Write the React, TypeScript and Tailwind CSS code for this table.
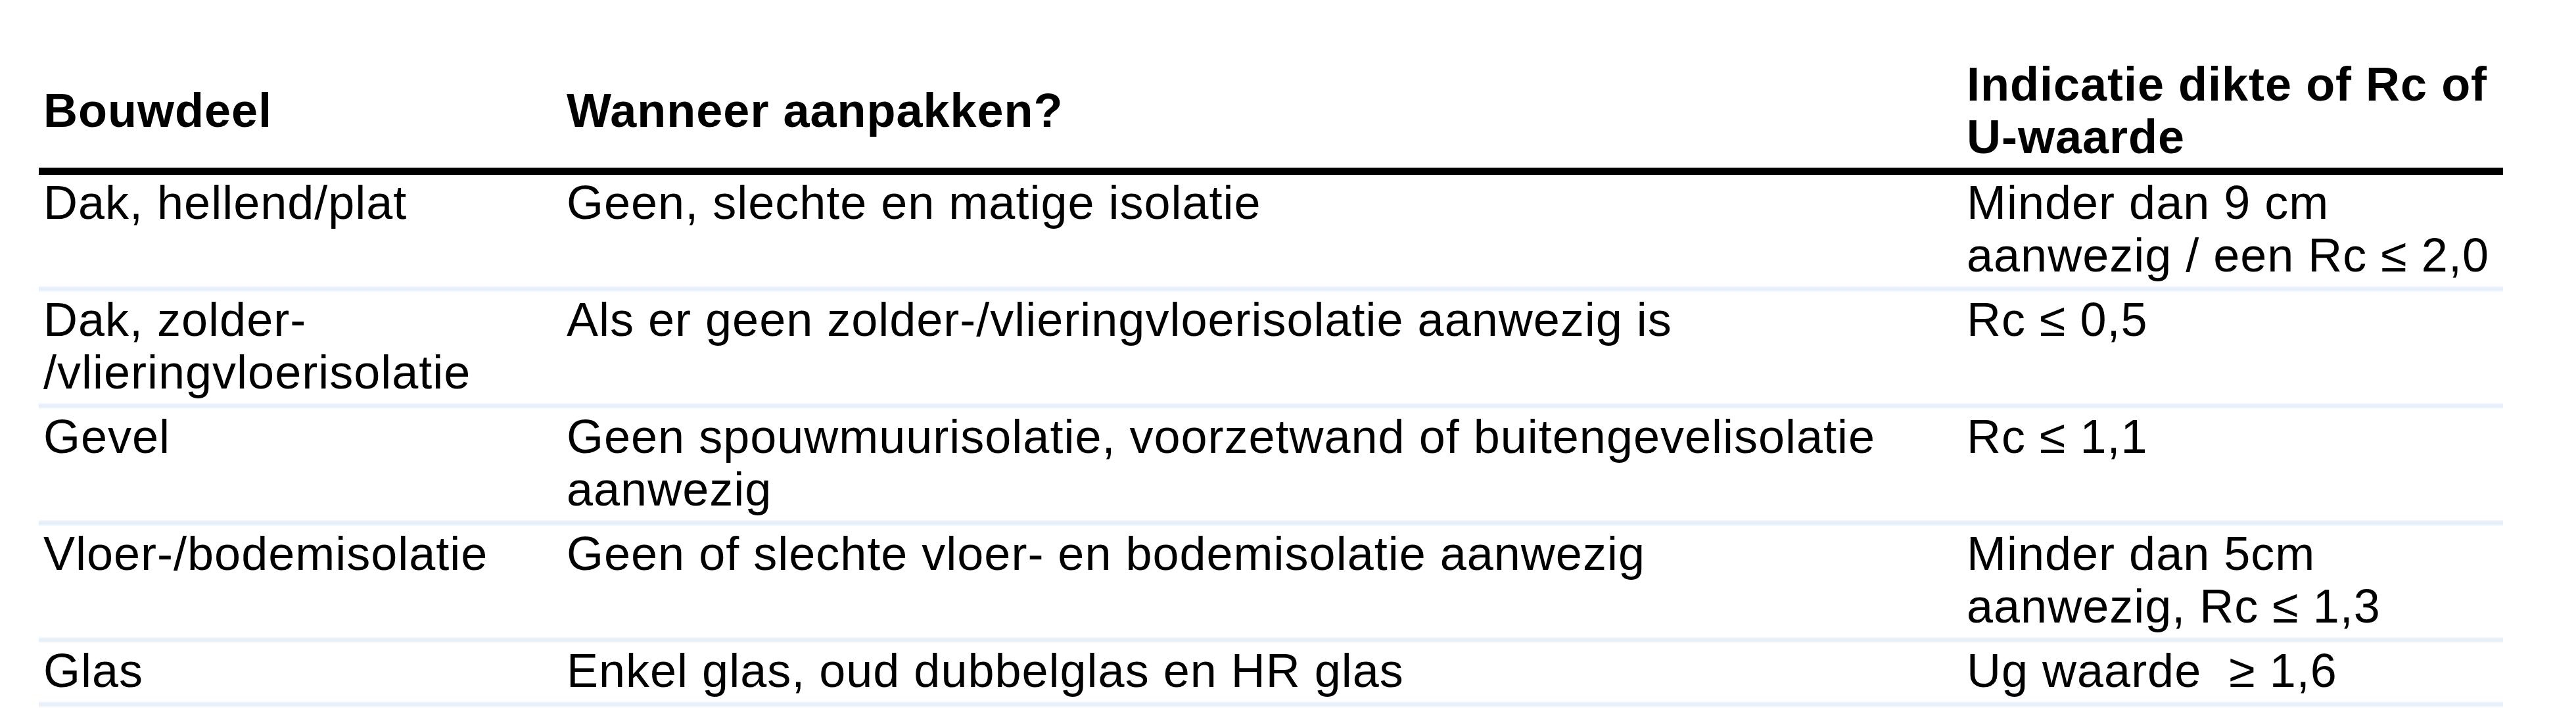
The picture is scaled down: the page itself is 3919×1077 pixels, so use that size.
import type { ReactNode } from 'react'

type Row = {
  part: ReactNode
  when: string
  value: ReactNode
}

const rows: Row[] = [
  {
    part: 'Dak, hellend/plat',
    when: 'Geen, slechte en matige isolatie',
    value: 'Minder dan 9 cm aanwezig / een Rc ≤ 2,0',
  },
  {
    part: (
      <>
        Dak, zolder-
        <br />
        /vlieringvloerisolatie
      </>
    ),
    when: 'Als er geen zolder-/vlieringvloerisolatie aanwezig is',
    value: 'Rc ≤ 0,5',
  },
  {
    part: 'Gevel',
    when: 'Geen spouwmuurisolatie, voorzetwand of buitengevelisolatie aanwezig',
    value: 'Rc ≤ 1,1',
  },
  {
    part: 'Vloer-/bodemisolatie',
    when: 'Geen of slechte vloer- en bodemisolatie aanwezig',
    value: 'Minder dan 5cm aanwezig, Rc ≤ 1,3',
  },
  {
    part: 'Glas',
    when: 'Enkel glas, oud dubbelglas en HR glas',
    value: 'Ug waarde\u00a0 ≥ 1,6',
  },
]

const cols = 'grid grid-cols-[796px_2130px_823px]'

function Separator() {
  return (
    <div className="h-[9px] border-y-2 border-[#f3f8fd] bg-[#e6f0fb]" />
  )
}

export default function App() {
  return (
    <div className="min-h-screen bg-white pl-[59px] pt-[88px] font-['Liberation_Sans',Arial,sans-serif] text-[72px] leading-[80px] tracking-[1px] text-black">
      <div className="w-[3749px]">
        <div className={`${cols} items-center pb-[7px] font-bold`}>
          <div className="pl-[7px]">Bouwdeel</div>
          <div className="pl-[7px]">Wanneer aanpakken?</div>
          <div className="pl-[7px]">Indicatie dikte of Rc of U-waarde</div>
        </div>
        <div className="h-[11px] bg-black" />
        {rows.map((r, i) => (
          <div key={i}>
            <div className={`${cols} items-start pt-[2px] pb-[7px]`}>
              <div className="pl-[7px]">{r.part}</div>
              <div className="pl-[7px]">{r.when}</div>
              <div className="pl-[7px]">{r.value}</div>
            </div>
            <Separator />
          </div>
        ))}
      </div>
    </div>
  )
}
